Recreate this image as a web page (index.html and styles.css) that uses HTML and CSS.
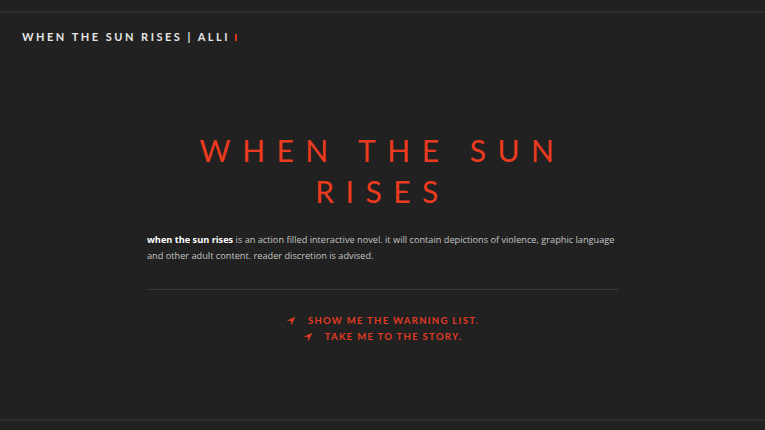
FILE: index.html
```html
<!DOCTYPE html>
<html lang="en">
<head>
<meta charset="utf-8">
<title>when the sun rises</title>
<link rel="stylesheet" href="styles.css">
</head>
<body>
<div class="page">
  <header class="site-header">
    <span class="site-title">WHEN THE SUN RISES | ALLI</span>
    <span class="mark"></span>
  </header>
  <main class="intro">
    <h1 class="story-title">WHEN THE SUN<br>RISES</h1>
    <p class="blurb"><strong>when the sun rises</strong> is an action filled interactive novel. it will contain depictions of violence, graphic language and other adult content. reader discretion is advised.</p>
    <hr class="rule">
    <nav class="links">
      <a class="link" href="#warnings">
        <svg class="arrow" viewBox="0 0 16 16" width="10" height="10"><path d="M15 1 L1 7.5 L8 8 L8.5 15 Z" fill="currentColor"/></svg>
        <span>SHOW ME THE WARNING LIST.</span>
      </a>
      <a class="link" href="#story">
        <svg class="arrow" viewBox="0 0 16 16" width="10" height="10"><path d="M15 1 L1 7.5 L8 8 L8.5 15 Z" fill="currentColor"/></svg>
        <span>TAKE ME TO THE STORY.</span>
      </a>
    </nav>
  </main>
</div>
</body>
</html>
```
FILE: styles.css
```css
html, body {
  margin: 0;
  padding: 0;
  background: #212121;
  height: 100%;
}

body {
  font-family: "Lato", "Open Sans", sans-serif;
  color: #e0e0e0;
}

.page {
  margin-top: 11px;
  border-top: 2px solid #2c2c2c;
  border-bottom: 2px solid #2c2c2c;
  height: 410px;
  box-sizing: border-box;
}

.site-header {
  display: flex;
  align-items: center;
  gap: 5px;
  padding: 17px 0 0 22px;
  height: 14px;
}

.site-title {
  font-size: 11px;
  letter-spacing: 2.5px;
  color: #e6e6e6;
  font-weight: 700;
  line-height: 14px;
}

.mark {
  width: 2px;
  height: 7px;
  background: #d9331c;
}

.intro {
  display: flex;
  flex-direction: column;
  align-items: center;
}

.story-title {
  margin: 86px 0 0 0;
  font-size: 30px;
  font-weight: 400;
  line-height: 41px;
  letter-spacing: 11.5px;
  text-align: center;
  color: #ec3a1f;
}

.blurb {
  width: 471px;
  margin: 20px 0 0 0;
  font-family: "Open Sans", sans-serif;
  font-size: 9.2px;
  line-height: 16px;
  color: #c4c4c4;
}

.blurb strong {
  color: #fff;
  font-weight: 700;
}

.rule {
  width: 471px;
  margin: 25px 0 0 0;
  border: 0;
  border-top: 1px solid #3a3a3a;
}

.links {
  margin-top: 24px;
  display: flex;
  flex-direction: column;
  align-items: center;
  gap: 3px;
}

.link {
  display: flex;
  align-items: center;
  gap: 12px;
  color: #e33a22;
  text-decoration: none;
  font-size: 9.5px;
  font-weight: 700;
  letter-spacing: 1.3px;
  line-height: 13px;
}

.arrow {
  display: block;
}
```
